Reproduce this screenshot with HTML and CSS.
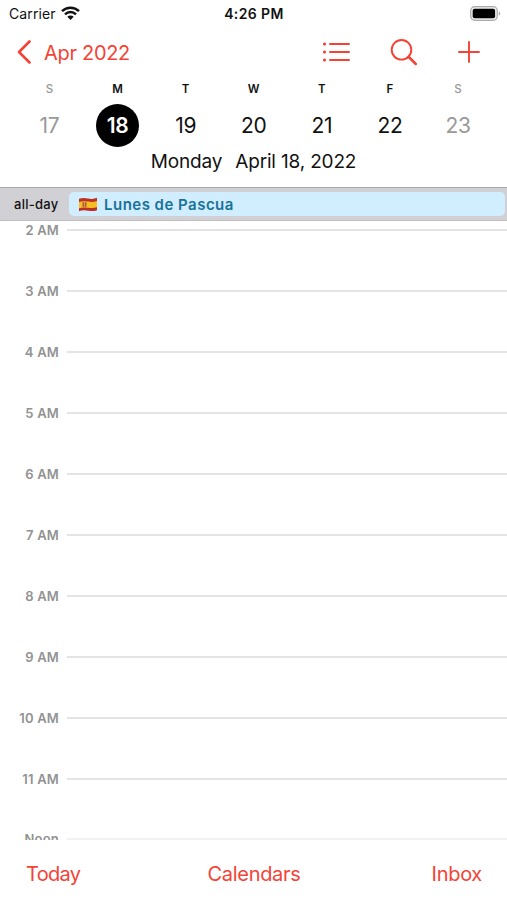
FILE: index.html
```html
<!DOCTYPE html>
<html lang="en">
<head>
<meta charset="utf-8">
<title>Calendar</title>
<link rel="stylesheet" href="styles.css">
</head>
<body>
<div class="phone">
  <header class="status">
    <div class="carrier"><span>Carrier</span>
      <svg width="19" height="15" viewBox="0 0 19 15" fill="none" stroke="#111" stroke-width="2.4"><path d="M1 5.2a12.2 12.2 0 0 1 17 0"/><path d="M4 8.3a7.9 7.9 0 0 1 11 0"/><path d="M6.3 10.7a4.6 4.6 0 0 1 6.4 0L9.5 14z" fill="#111" stroke="none"/></svg>
    </div>
    <div class="clock">4:26 PM</div>
    <svg class="battery" width="31" height="15" viewBox="0 0 31 15"><rect x=".7" y=".7" width="26.6" height="13.6" rx="4" fill="#eee" stroke="#aaa" stroke-width="1.2"/><rect x="2.7" y="2.7" width="22.4" height="9.6" rx="2" fill="#000"/><path d="M28.8 5.2q3 2.3 0 4.6z" fill="#aaa"/></svg>
  </header>
  <nav class="nav">
    <a class="back"><svg width="15" height="24" viewBox="0 0 15 24"><path d="M13.5 1.5 3 12l10.5 10.5"/></svg><span>Apr 2022</span></a>
    <div class="actions">
      <svg width="28" height="22" viewBox="0 0 28 22"><path d="M8 3H27M8 11H27M8 19H27"/><path class="dots" d="M2.5 3h.01M2.5 11h.01M2.5 19h.01"/></svg>
      <svg width="28" height="28" viewBox="0 0 28 28"><circle cx="11.5" cy="11.8" r="9.8"/><path d="m18.8 19 7 7" class="handle"/></svg>
      <svg width="22" height="22" viewBox="0 0 22 22"><path d="M11 1v20M1 11h20"/></svg>
    </div>
  </nav>
  <section class="week">
    <div class="day weekend"><small>S</small><b>17</b></div>
    <div class="day selected"><small>M</small><b>18</b></div>
    <div class="day"><small>T</small><b>19</b></div>
    <div class="day"><small>W</small><b>20</b></div>
    <div class="day"><small>T</small><b>21</b></div>
    <div class="day"><small>F</small><b>22</b></div>
    <div class="day weekend"><small>S</small><b>23</b></div>
  </section>
  <h1 class="date"><span>Monday</span><span>April 18, 2022</span></h1>
  <section class="allday">
    <span class="label">all-day</span>
    <div class="event">
      <svg width="20" height="15" viewBox="0 0 20 15"><path d="M1 1.8q4-1.5 9-.3t9-.7v12.4q-4 1.5-9 .5t-9 .5z" fill="#bd3024"/><path d="M1 5q4-1.4 9-.4t9-.5v6.2q-4 1.2-9 .4t-9 .5z" fill="#f7bd22"/><path d="M4.5 5.3h4v4.2q-2 1.5-4 0z" fill="#aa5b32"/><path d="M6.5 5v5" stroke="#d99b60"/></svg>
      <span>Lunes de Pascua</span>
    </div>
  </section>
  <main class="hours">
    <div class="hour"><span>2 AM</span><i></i></div>
    <div class="hour"><span>3 AM</span><i></i></div>
    <div class="hour"><span>4 AM</span><i></i></div>
    <div class="hour"><span>5 AM</span><i></i></div>
    <div class="hour"><span>6 AM</span><i></i></div>
    <div class="hour"><span>7 AM</span><i></i></div>
    <div class="hour"><span>8 AM</span><i></i></div>
    <div class="hour"><span>9 AM</span><i></i></div>
    <div class="hour"><span>10 AM</span><i></i></div>
    <div class="hour"><span>11 AM</span><i></i></div>
    <div class="hour last"><span>Noon</span><i></i></div>
  </main>
  <footer class="toolbar"><a>Today</a><a>Calendars</a><a>Inbox</a></footer>
</div>
</body>
</html>
```
FILE: styles.css
```css
* { box-sizing: border-box; }
body { margin: 0; background: #fff; color: #111; font-family: Inter, "Liberation Sans", sans-serif; }
svg { display: block; flex: none; }
.phone { width: 507px; height: 900px; overflow: hidden; display: flex; flex-direction: column; }
.status { height: 28px; flex: none; display: grid; grid-template-columns: 1fr auto 1fr; align-items: center; padding: 0 6px 1px 9px; }
.carrier { display: flex; align-items: center; gap: 5px; font-size: 14px; letter-spacing: .1px; }
.clock { margin-left: -2px; font-size: 14px; font-weight: 600; letter-spacing: .4px; }
.battery { justify-self: end; }
.nav { height: 48px; flex: none; display: flex; align-items: center; justify-content: space-between; padding: 0 27px 0 16px; color: #f44336; }
.nav svg { fill: none; stroke: #f44336; stroke-width: 1.9; stroke-linecap: round; stroke-linejoin: round; }
.back { display: flex; align-items: center; gap: 13px; font-size: 20px; letter-spacing: -.3px; }
.back span { padding-top: 1px; }
.nav .back svg { stroke-width: 2.6; }
.nav .dots { stroke-width: 3.2; }
.nav .handle { stroke-width: 2.5; }
.actions { display: flex; align-items: center; gap: 40px; }
.week { height: 73px; flex: none; display: grid; grid-template-columns: repeat(7, 68.1px); padding-left: 15.4px; }
.day { display: flex; flex-direction: column; align-items: center; }
.day small { font-size: 11.5px; line-height: 27px; font-weight: 600; }
.day b { width: 43px; height: 43px; margin-top: 1px; border-radius: 50%; line-height: 43px; text-align: center; font-size: 21px; font-weight: 400; letter-spacing: -.3px; }
.weekend { color: #999; }
.weekend small { font-weight: 500; }
.selected b { background: #000; color: #fff; font-weight: 600; }
.date { height: 38px; flex: none; margin: 0; padding-top: 1px; display: flex; justify-content: center; gap: 13px; font-size: 19px; line-height: 24px; font-weight: 400; letter-spacing: -.17px; }
.allday { height: 34px; flex: none; display: flex; align-items: center; padding: 0 2px 0 14px; background: #d1d1d5; border-top: 1px solid #aaaaad; border-bottom: 1px solid #c0c0c3; }
.label { width: 55px; font-size: 13px; font-weight: 500; letter-spacing: .25px; }
.event { flex: 1; height: 24px; display: flex; align-items: center; gap: 6px; padding-left: 9px; border-radius: 5px; background: #d0eeff; color: #197298; font-size: 15px; font-weight: 600; letter-spacing: .48px; }
.hours { height: 619px; flex: none; overflow: hidden; }
.hour { height: 61.05px; display: flex; align-items: flex-start; }
.hour span { width: 59px; text-align: right; font-size: 13px; line-height: 18px; font-weight: 600; letter-spacing: .2px; color: #929292; }
.hour i { flex: 1; height: 2px; margin: 8px 0 0 8px; background: #e4e4e4; }
.hour.last { margin-top: -1.5px; }
.hour.last i { background: #f2f2f2; }
.toolbar { flex: 1; display: grid; grid-template-columns: 1fr auto 1fr; padding: 20px 25px 0 26px; font-size: 20px; line-height: 28px; letter-spacing: -.3px; color: #f44336; }
.toolbar a:first-child { letter-spacing: -.7px; }
.toolbar a:last-child { text-align: right; }
```
